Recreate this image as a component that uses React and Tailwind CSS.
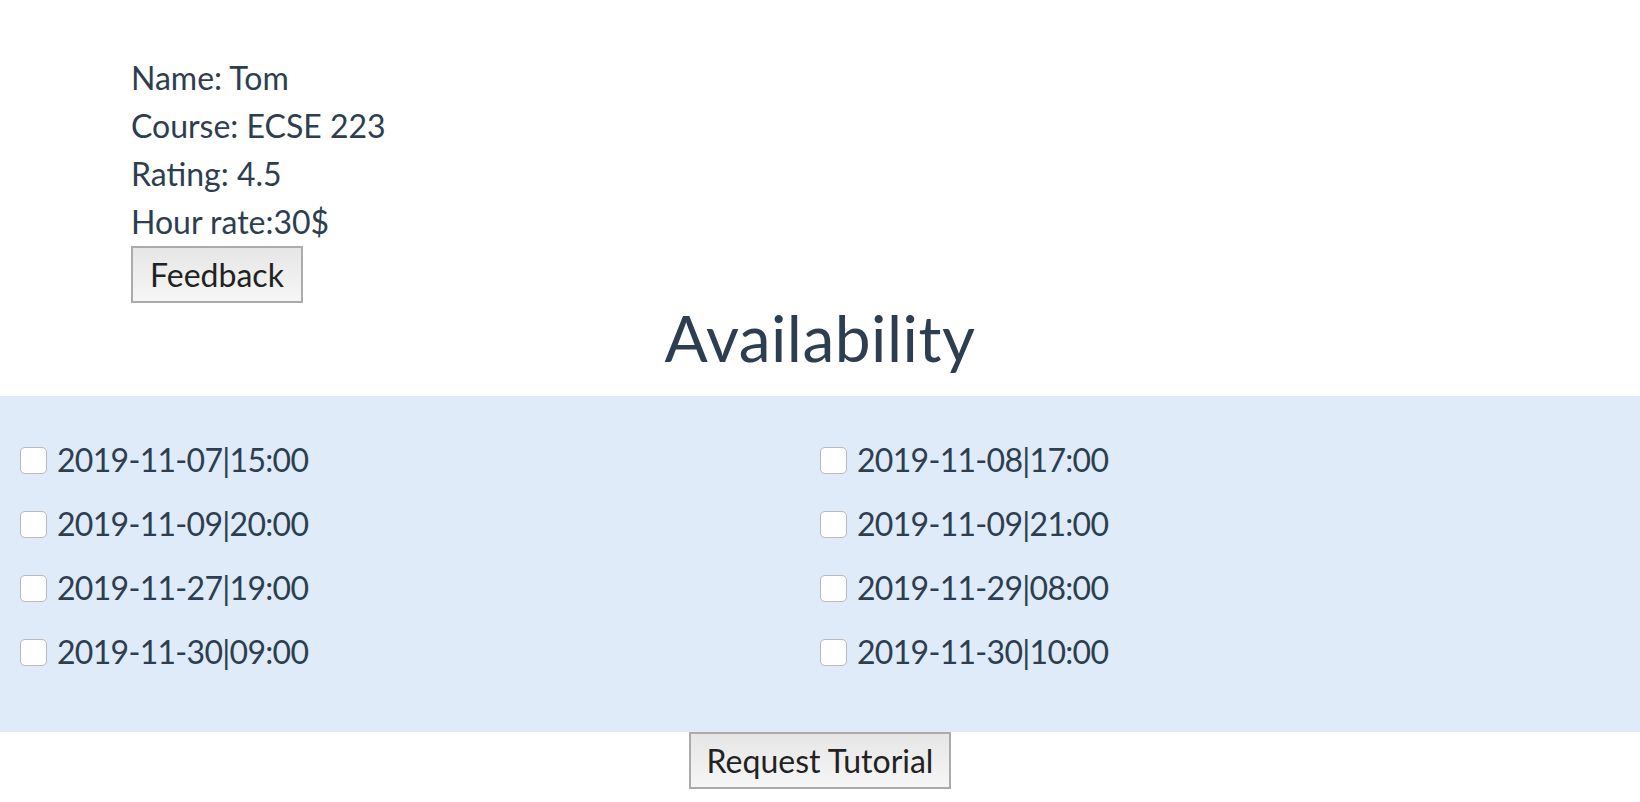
export default function App() {
  const slots = [
    "2019-11-07|15:00",
    "2019-11-08|17:00",
    "2019-11-09|20:00",
    "2019-11-09|21:00",
    "2019-11-27|19:00",
    "2019-11-29|08:00",
    "2019-11-30|09:00",
    "2019-11-30|10:00",
  ];
  return (
    <div className="w-full min-h-[802px] bg-white text-[#2c3e50] font-['Lato',_'Noto_Sans',_sans-serif]">
      <div className="pt-[54px] pl-[131px] text-[32px] leading-[48px]">
        <div>Name: Tom</div>
        <div>Course: ECSE 223</div>
        <div>Rating: 4.5</div>
        <div>Hour rate:30$</div>
        <button className="w-[172px] h-[57px] border-2 border-[#ababab] bg-gradient-to-b from-[#e6e6e6] to-[#f6f6f6] text-[#222] text-[32px] leading-none flex items-center justify-center">
          Feedback
        </button>
      </div>
      <h1 className="text-center text-[64px] leading-[64px] h-[93px] pt-[3px] tracking-[0.5px]">Availability</h1>
      <div className="bg-[#dfebf8] pt-[32px] pb-[48px] px-[20px] grid grid-cols-2 text-[32px]">
        {slots.map((s) => (
          <label key={s} className="h-[64px] flex items-center gap-[10px]">
            <span className="w-[27px] h-[27px] rounded-[5px] border border-[#b9b9b9] bg-white shrink-0" />
            <span className="tracking-[-0.7px]">{s}</span>
          </label>
        ))}
      </div>
      <div className="flex justify-center">
        <button className="w-[262px] h-[57px] border-2 border-[#ababab] bg-gradient-to-b from-[#e6e6e6] to-[#f6f6f6] text-[#222] text-[32px] leading-none flex items-center justify-center">
          Request Tutorial
        </button>
      </div>
    </div>
  );
}
